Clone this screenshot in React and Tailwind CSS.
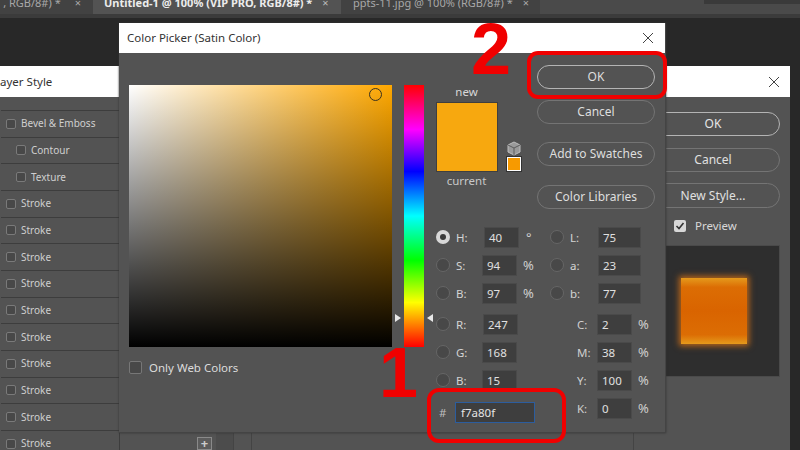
import React from 'react';

const UI_FONT = "font-['Noto_Sans','Open_Sans',sans-serif]";

function CloseIcon() {
  return (
    <svg width="12" height="12" viewBox="0 0 12 12" className="text-[#444]">
      <path d="M1 1 L11 11 M11 1 L1 11" stroke="currentColor" strokeWidth="1" fill="none" />
    </svg>
  );
}

function Cube() {
  return (
    <svg width="14" height="15" viewBox="0 0 14 15">
      <path d="M7 1 L13 4 V11 L7 14 L1 11 V4 Z" fill="#9a9a9a" stroke="#bdbdbd" strokeWidth="1" />
      <path d="M1 4 L7 7 L13 4 M7 7 V14" fill="none" stroke="#5c5c5c" strokeWidth="1" />
    </svg>
  );
}

function Check({ label, indent }) {
  return (
    <div className={`flex items-center h-[26.67px] border-b border-[#3d3d3d] ${indent ? 'pl-[15px]' : 'pl-[5px]'}`}>
      <div className="w-[10px] h-[10px] rounded-[2px] border border-[#7a7a7a] bg-[#484848] shrink-0" />
      <span className="ml-[5px] text-[10px] text-[#cfcfcf]">{label}</span>
    </div>
  );
}

function PickerButton({ children, className }) {
  return (
    <div className={`w-[118px] h-[24px] rounded-full border border-[#747474] flex items-center justify-center text-[12px] text-[#dedede] ${className || ''}`}>
      {children}
    </div>
  );
}

function Radio({ on }) {
  return (
    <div className={`mt-[3px] w-[14px] h-[14px] rounded-full shrink-0 flex items-center justify-center ${on ? 'bg-[#d8d8d8]' : 'bg-[#484848] border border-[#666]'}`}>
      {on && <div className="w-[6px] h-[6px] rounded-full bg-[#3a3a3a]" />}
    </div>
  );
}

function NumInput({ value, width }) {
  return (
    <div className={`${width} h-[21px] bg-[#3e3e3e] border border-[#4a4a4a] flex items-center pl-[4px] text-[11.5px] text-[#e0e0e0]`}>
      {value}
    </div>
  );
}

function Field({ label, value, on, unit, labelW, inputW, unitCls }) {
  return (
    <div className="h-[28px] flex items-start">
      <Radio on={on} />
      <span className={`ml-[6px] ${labelW} text-[11.5px] text-[#d4d4d4] leading-[21px]`}>{label}</span>
      <NumInput value={value} width={inputW} />
      {unit && <span className={`${unitCls} text-[13px] text-[#cfcfcf] leading-[20px]`}>{unit}</span>}
    </div>
  );
}

function CmykField({ label, value }) {
  return (
    <div className="h-[28px] flex items-start pl-[27px]">
      <span className="w-[20px] text-[11.5px] text-[#cfcfcf] leading-[21px]">{label}</span>
      <NumInput value={value} width="w-[35px]" />
      <span className="ml-[6px] text-[13px] text-[#cfcfcf] leading-[20px]">%</span>
    </div>
  );
}

export default function App() {
  const strokes = Array.from({ length: 10 });

  return (
    <div className={`relative w-[800px] h-[450px] overflow-hidden bg-[#282828] ${UI_FONT}`}>
      {/* Tabs */}
      <div className="relative h-[14px] bg-[#4a4a4a] flex text-[11px] leading-[14px] overflow-hidden">
        <div className="w-[93px] bg-[#424242] flex justify-end pr-[12px] gap-[14px] text-[#a8a8a8] -mt-[4px] h-[18px]">
          <span>, RGB/8#) *</span><span>×</span>
        </div>
        <div className="w-[248px] bg-[#535353] flex pl-[11px] gap-[10px] font-bold text-[#ececec] -mt-[4px] h-[18px]">
          <span>Untitled-1 @ 100% (VIP PRO, RGB/8#) *</span><span className="font-normal text-[#bbb]">×</span>
        </div>
        <div className="w-[199px] bg-[#424242] flex pl-[12px] gap-[10px] text-[#a8a8a8] -mt-[4px] h-[18px]">
          <span>ppts-11.jpg @ 100% (RGB/8#) *</span><span>×</span>
        </div>
        <div className="absolute right-0 top-0 w-[96px] h-[4px] bg-[#3a3a3a]" />
      </div>
      <div className="h-[4px] bg-[#3b3b3b]" />

      {/* Layer Style window */}
      <div className="absolute left-[-7px] top-[66px] w-[797px] h-[384px] bg-[#535353] border-l border-[#444]">
        <div className="h-[31px] bg-white flex items-center justify-between pr-[10px] text-[11.5px] text-[#333]">
          <span>Layer Style</span>
          <CloseIcon />
        </div>
        <div className="flex h-[353px]">
          <div className="w-[126px] pt-[13px] overflow-hidden pl-[7px] border-r border-[#3d3d3d]">
            <div className="border-t border-[#3d3d3d]">
              <Check label="Bevel & Emboss" />
              <Check label="Contour" indent />
              <Check label="Texture" indent />
              {strokes.map((_, i) => <Check key={i} label="Stroke" />)}
            </div>
          </div>
          <div className="flex-1 relative">
            {/* bottom strip under the picker */}
            <div className="absolute left-[77px] bottom-0 w-[15px] h-[13px] border border-[#8a8a8a] bg-[#5c5c5c] flex items-center justify-center text-[13px] leading-none font-bold text-[#ccc]">+</div>
            <div className="absolute left-[96px] bottom-0 w-[18px] h-[17px] bg-[#4c4c4c] border-r border-[#444]" />
            <div className="absolute left-[131px] bottom-0 w-px h-[17px] bg-[#444]" />
            <div className="absolute left-[513px] bottom-0 w-px h-[17px] bg-[#444]" />
          </div>
          <div className="w-[140px] pr-[10px] pt-[15px] flex flex-col items-end shrink-0">
            <div className="w-[134px] h-[24px] rounded-full border border-[#b4b4b4] flex items-center justify-center text-[12px] text-[#e6e6e6] shrink-0">OK</div>
            <div className="mt-[12px] w-[134px] h-[24px] rounded-full border border-[#747474] flex items-center justify-center text-[12px] text-[#e0e0e0] shrink-0">Cancel</div>
            <div className="mt-[11px] w-[134px] h-[25px] rounded-full border border-[#747474] flex items-center justify-center text-[12px] text-[#e0e0e0] shrink-0">New Style...</div>
            <div className="mt-[12px] w-[115px] flex items-center h-[12px] pl-[9px] shrink-0">
              <div className="w-[12px] h-[12px] bg-[#d8d8d8] rounded-[2px] flex items-center justify-center">
                <svg width="10" height="10" viewBox="0 0 10 10"><path d="M1.5 5 L4 7.5 L8.5 2" stroke="#333" strokeWidth="1.6" fill="none" /></svg>
              </div>
              <span className="ml-[9px] text-[11.5px] text-[#d8d8d8]">Preview</span>
            </div>
            <div className="mt-[13px] w-[115px] h-[132px] bg-[#2e2e2e] border border-[#4a4a4a] flex items-center pl-[15px] shrink-0">
              <div className="w-[66px] h-[66px] bg-[linear-gradient(to_bottom,#e59a1c_0%,#dc6d04_14%,#d96400_50%,#dc6d04_86%,#e59a1c_100%)] shadow-[0_0_6px_2px_#b8651a]" />
            </div>
          </div>
        </div>
      </div>

      {/* Color Picker window */}
      <div className="absolute left-[119px] top-[23px] w-[547px] h-[410px] bg-[#535353] border-r border-b border-[#444] shadow-[0_0_2px_#333]">
        <div className="h-[30px] bg-white flex items-center justify-between pl-[8px] pr-[11px] text-[11.5px] text-[#333]">
          <span>Color Picker (Satin Color)</span>
          <CloseIcon />
        </div>
        <div className="flex pl-[10px] pt-[12px]">
          <div className="w-[263px] pt-[20px] shrink-0">
            <div className="relative w-[263px] h-[262px] bg-[linear-gradient(to_top,#000,rgba(0,0,0,0)),linear-gradient(to_right,#fff,#ffa800)]">
              <div className="absolute left-[240px] top-[3px] w-[13px] h-[13px] rounded-full border border-[#3a3220]" />
            </div>
            <div className="flex items-center mt-[12px]">
              <div className="w-[13px] h-[13px] rounded-[2px] border border-[#777] bg-[#484848]" />
              <span className="ml-[7px] text-[11.5px] text-[#dcdcdc]">Only Web Colors</span>
            </div>
          </div>

          <div className="relative ml-[12px] mt-[20px] w-[20px] h-[262px] shrink-0 bg-[linear-gradient(to_bottom,#ff0000_0%,#ff00ff_17%,#0000ff_33%,#00ffff_50%,#00ff00_67%,#ffff00_83%,#ff0000_100%)]">
            <div className="absolute left-[-9px] top-[229px] w-0 h-0 border-y-[4px] border-y-transparent border-l-[6px] border-l-[#e8e8e8]" />
            <div className="absolute right-[-9px] top-[229px] w-0 h-0 border-y-[4px] border-y-transparent border-r-[6px] border-r-[#e8e8e8]" />
          </div>

          <div className="ml-[12px] flex-1">
            <div className="h-[162px] flex items-start">
              <div className="w-[61px] flex flex-col items-center shrink-0">
                <span className="text-[11.5px] leading-[16px] mt-[19px] text-[#d8d8d8]">new</span>
                <div className="mt-[2px] w-[62px] h-[70px] bg-[#f7a80f] border border-[#3f3f3f]" />
                <span className="text-[11.5px] leading-[16px] mt-[1px] text-[#c8c8c8]">current</span>
              </div>
              <div className="w-[15px] ml-[9px] mt-[76px] flex flex-col items-center shrink-0">
                <Cube />
                <div className="mt-[1px] w-[14px] h-[14px] border border-white outline outline-1 outline-[#333] bg-[#f79a00]" />
              </div>
              <div className="ml-[16px] flex flex-col shrink-0">
                <PickerButton className="border-[#b4b4b4]">OK</PickerButton>
                <PickerButton className="mt-[11px]">Cancel</PickerButton>
                <PickerButton className="mt-[18px]">Add to Swatches</PickerButton>
                <PickerButton className="mt-[19px]">Color Libraries</PickerButton>
              </div>
            </div>

            <div className="flex">
              <div className="w-[114px] shrink-0">
                <Field label="H:" value="40" on unit="°" labelW="w-[28px]" inputW="w-[35px]" unitCls="ml-[7px]" />
                <Field label="S:" value="94" unit="%" labelW="w-[26px]" inputW="w-[35px]" unitCls="ml-[6px]" />
                <Field label="B:" value="97" unit="%" labelW="w-[26px]" inputW="w-[35px]" unitCls="ml-[6px]" />
                <div className="h-[3px]" />
                <Field label="R:" value="247" labelW="w-[27px]" inputW="w-[35px]" />
                <Field label="G:" value="168" labelW="w-[26px]" inputW="w-[35px]" />
                <Field label="B:" value="15" labelW="w-[26px]" inputW="w-[35px]" />
                <div className="mt-[4px] flex items-center h-[21px] pl-[3px]">
                  <span className="w-[16px] text-[11.5px] text-[#bdbdbd]">#</span>
                  <div className="w-[80px] h-[21px] bg-[#3e3e3e] border border-[#2c5d9e] flex items-center pl-[5px] text-[11.5px] text-[#e4e4e4]">f7a80f</div>
                </div>
              </div>
              <div className="flex-1">
                <Field label="L:" value="75" labelW="w-[28px]" inputW="w-[43px]" />
                <Field label="a:" value="23" labelW="w-[28px]" inputW="w-[43px]" />
                <Field label="b:" value="77" labelW="w-[28px]" inputW="w-[43px]" />
                <div className="h-[3px]" />
                <CmykField label="C:" value="2" />
                <CmykField label="M:" value="38" />
                <CmykField label="Y:" value="100" />
                <CmykField label="K:" value="0" />
              </div>
            </div>
          </div>
        </div>
      </div>

      {/* Red annotations */}
      <div className="absolute left-[527px] top-[51px] w-[140px] h-[48px] rounded-[11px] border-[4px] border-[#f00000]" />
      <div className="absolute left-[427px] top-[388px] w-[139px] h-[55px] rounded-[12px] border-[4px] border-[#f00000]" />
      <div className="absolute left-[471px] top-[9px] font-['Liberation_Sans',sans-serif] font-bold text-[72px] leading-[80px] text-[#f00000]">2</div>
      <div className="absolute left-[379px] top-[333px] font-['Liberation_Sans',sans-serif] font-bold text-[70px] leading-[80px] text-[#f00000]">1</div>
    </div>
  );
}
